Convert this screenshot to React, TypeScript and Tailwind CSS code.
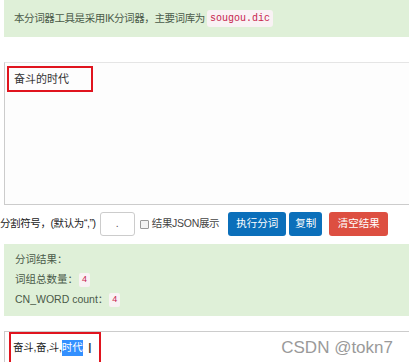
import React from "react";

export default function App() {
  return (
    <div
      className="relative h-[362px] w-[409px] overflow-hidden whitespace-nowrap bg-white text-[10.5px] text-[#333]"
      style={{ fontFamily: '"Liberation Sans", "Noto Sans CJK SC", sans-serif' }}
    >
      <div className="ml-[4px] flex h-[37px] items-center bg-[#dff0d8] pl-[10px] text-[#4a5a48]">
        <span className="tracking-[-0.4px]">本分词器工具是采用IK分词器，主要词库为</span>
        <code
          className="ml-[2px] rounded-[3px] bg-[#f9f2f4] px-[3px] py-[1px] text-[10px] text-[#c7254e]"
          style={{ fontFamily: '"Liberation Mono", "DejaVu Sans Mono", monospace' }}
        >
          sougou.dic
        </code>
      </div>

      <div className="ml-[4px] mt-[25px] h-[143px] border border-r-0 border-[#ccc] border-t-[#e5e5e5] bg-[#fdfdfd] pt-[3px] pl-[2px]">
        <div className="flex h-[26px] w-[86px] items-center border-2 border-[#e0141e] pl-[5px] text-[11px] text-[#333]">
          奋斗的时代
        </div>
      </div>

      <div className="mt-[7px] flex h-[24px] items-center">
        <span className="shrink-0 tracking-[-0.4px] text-[#222]">分割符号，(默认为“,”)</span>
        <div className="ml-[4px] flex h-[24px] w-[35px] shrink-0 items-center justify-center rounded-[3px] border border-[#ccc] text-[#555]">
          .
        </div>
        <span className="ml-[5px] h-[9px] w-[9px] shrink-0 rounded-[1px] border border-[#999] bg-[#f3f3f3]" />
        <span className="ml-[3px] shrink-0 tracking-[-0.3px] text-[#444]">结果JSON展示</span>
        <button className="ml-[9px] h-[24px] w-[58px] shrink-0 rounded-[3px] bg-[#0b6fba] text-[10.5px] text-white">
          执行分词
        </button>
        <button className="ml-[3px] h-[24px] w-[33px] shrink-0 rounded-[3px] bg-[#0b6fba] text-[10.5px] text-white">
          复制
        </button>
        <button className="ml-[7px] h-[24px] w-[59px] shrink-0 rounded-[3px] bg-[#dd4f41] text-[10.5px] text-white">
          清空结果
        </button>
      </div>

      <div className="ml-[4px] mt-[8px] flex h-[72px] flex-col justify-center gap-[4px] bg-[#dff0d8] pl-[11px] text-[#4a5a48]">
        <div>分词结果：</div>
        <div className="flex items-center">
          词组总数量：
          <span className="ml-[1px] rounded-[2px] bg-[#f9f2f4] px-[3px] text-[9px] text-[#c7254e]">4</span>
        </div>
        <div className="flex items-center">
          CN_WORD count：
          <span className="ml-[1px] rounded-[2px] bg-[#f9f2f4] px-[3px] text-[9px] text-[#c7254e]">4</span>
        </div>
      </div>

      <div className="ml-[4px] mt-[15px] h-[40px] border-l border-t border-[#ccc] pl-[4px]">
        <div className="flex items-center">
          <div className="flex h-[32px] w-[92px] shrink-0 items-center border-2 border-[#e0141e] pl-[2px] text-[10.5px] text-[#222]">
            <span className="tracking-[-0.3px]">奋斗,奋,斗,</span>
            <span className="bg-[#3390ff] text-white">时代</span>
            <span className="ml-[5px] text-[15px] font-light text-[#333]">I</span>
          </div>
          <span
            className="ml-auto mr-[16px] text-[17px] text-[#9a9a9a]"
            style={{ fontFamily: '"Liberation Sans", Arial, sans-serif' }}
          >
            CSDN @tokn7
          </span>
        </div>
      </div>
    </div>
  );
}
